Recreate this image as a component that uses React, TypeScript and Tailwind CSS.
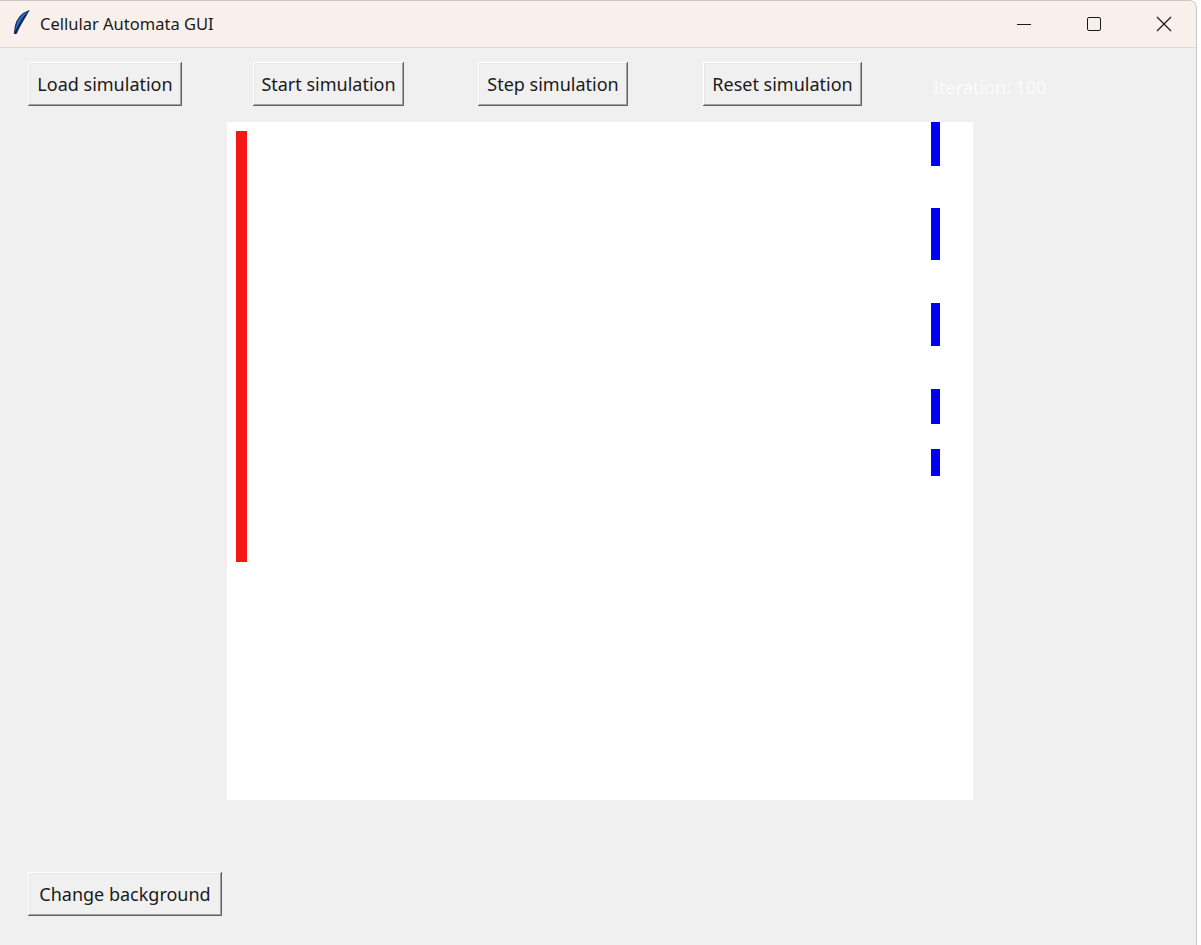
import React from "react";

const btn =
  "h-[44px] bg-[#f0f0f0] text-[#1a1a1a] text-[18px] flex items-center justify-center shadow-[inset_-1px_-1px_0_#646464,inset_1px_1px_0_#ffffff,inset_-2px_-2px_0_#a0a0a0,inset_2px_2px_0_#e8e8e8]";

function Feather() {
  return (
    <svg width="18" height="26" viewBox="0 0 18 26">
      <path d="M16.5 1 C10 3 5 9 3.5 16 L2.5 23 L4.5 23 C7 16 12 9 16.5 1 Z" fill="#2f6fd0" stroke="#1a3366" strokeWidth="1.3" />
      <path d="M14.5 4 C10 9 6.5 15 3 24" stroke="#142444" strokeWidth="1.4" fill="none" />
    </svg>
  );
}

export default function App() {
  const blues: [number, number][] = [
    [0, 44],
    [86, 52],
    [181, 43],
    [267, 35],
    [327, 27],
  ];
  return (
    <div className="w-[1201px] h-[945px] bg-white flex overflow-hidden" style={{ fontFamily: '"Noto Sans", "Open Sans", sans-serif' }}>
      <div className="w-[1197px] h-[945px] flex flex-col bg-[#f0f0f0] rounded-tr-[8px] border-r border-t border-[#c8c8c8] overflow-hidden">
        <div className="h-[47px] bg-[#f9f0eb] border-b border-[#dcdcdc] flex items-center shrink-0">
          <div className="ml-[12px] mt-[-2px]">
            <Feather />
          </div>
          <div className="ml-[10px] text-[16.5px] text-[#1a1a1a]">Cellular Automata GUI</div>
          <div className="flex-1" />
          <div className="w-[70px] flex items-center justify-center">
            <div className="w-[14px] h-[1px] bg-[#1a1a1a]" />
          </div>
          <div className="w-[70px] flex items-center justify-center">
            <div className="w-[14px] h-[14px] border border-[#1a1a1a] rounded-[2px]" />
          </div>
          <div className="w-[70px] flex items-center justify-center mr-[-3px]">
            <svg width="16" height="16" viewBox="0 0 16 16">
              <path d="M1 1 L15 15 M15 1 L1 15" stroke="#1a1a1a" strokeWidth="1.2" />
            </svg>
          </div>
        </div>
        <div className="flex items-center mt-[14px] pl-[28px]">
          <div className={`${btn} w-[154px]`}>Load simulation</div>
          <div className={`${btn} w-[151px] ml-[71px]`}>Start simulation</div>
          <div className={`${btn} w-[150px] ml-[74px]`}>Step simulation</div>
          <div className={`${btn} w-[159px] ml-[75px]`}>Reset simulation</div>
          <div className="ml-[71px] mt-[6px] text-[18px] text-[#fbfbfb]">Iteration: 100</div>
        </div>
        <div className="mt-[16px] ml-[227px] w-[746px] h-[678px] bg-white relative">
          <div className="absolute left-[9px] top-[9px] w-[11px] h-[431px] bg-[#f51717]" />
          {blues.map(([t, h], i) => (
            <div key={i} className="absolute left-[704px] w-[9px] bg-[#0000f5]" style={{ top: t, height: h }} />
          ))}
        </div>
        <div className="mt-[72px] pl-[28px]">
          <div className={`${btn} w-[194px]`}>Change background</div>
        </div>
      </div>
    </div>
  );
}
